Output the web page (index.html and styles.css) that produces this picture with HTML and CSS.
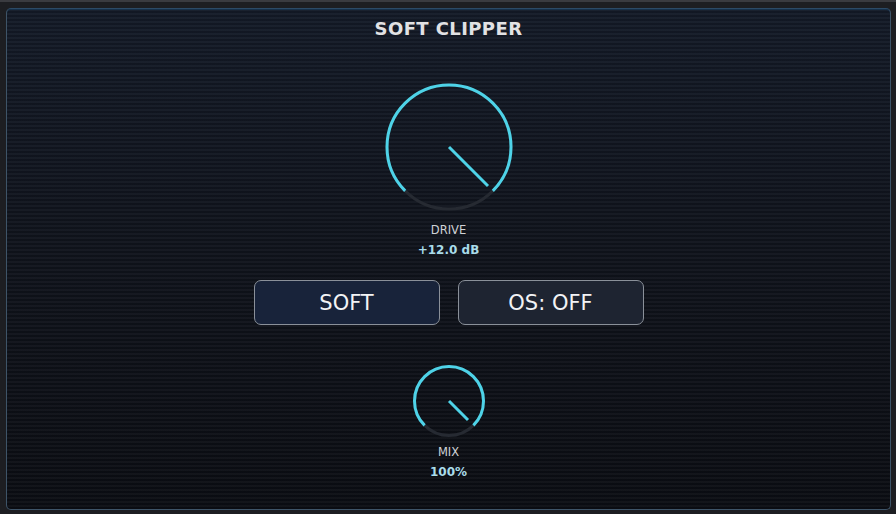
FILE: index.html
```html
<!DOCTYPE html>
<html lang="en">
<head>
<meta charset="utf-8">
<title>Soft Clipper</title>
<link rel="stylesheet" href="styles.css">
</head>
<body>
<div class="frame">
  <main class="panel">
    <h1 class="title">SOFT CLIPPER</h1>

    <section class="knob knob-drive">
      <svg class="dial" width="130" height="130" viewBox="0 0 130 130">
        <circle class="track" cx="65" cy="65" r="62"/>
        <path class="value-arc" d="M21.16 108.84 A62 62 0 1 1 108.84 108.84"/>
        <line class="pointer" x1="65" y1="65" x2="104" y2="104"/>
      </svg>
      <div class="knob-label">DRIVE</div>
      <div class="knob-value">+12.0 dB</div>
    </section>

    <div class="toggles">
      <button class="toggle toggle-mode">SOFT</button>
      <button class="toggle toggle-os">OS: OFF</button>
    </div>

    <section class="knob knob-mix">
      <svg class="dial" width="74" height="74" viewBox="0 0 74 74">
        <circle class="track" cx="37" cy="37" r="34.5"/>
        <path class="value-arc" d="M12.6 61.4 A34.5 34.5 0 1 1 61.4 61.4"/>
        <line class="pointer" x1="37" y1="37" x2="56" y2="56"/>
      </svg>
      <div class="knob-label">MIX</div>
      <div class="knob-value">100%</div>
    </section>
  </main>
</div>
</body>
</html>
```

FILE: styles.css
```css
html, body {
  margin: 0;
  padding: 0;
}

body {
  width: 896px;
  height: 514px;
  background: #1d1e22;
  font-family: "DejaVu Sans", Verdana, sans-serif;
  overflow: hidden;
}

.frame {
  height: 514px;
  box-sizing: border-box;
  border-top: 2px solid #3a3b40;
  padding: 6px 5px 4px 6px;
}

.panel {
  box-sizing: border-box;
  height: 502px;
  border: 1px solid #3e5468;
  border-top-color: #2c4a66;
  border-radius: 5px;
  background:
    repeating-linear-gradient(to bottom,
      rgba(255, 255, 255, 0.03) 0px,
      rgba(255, 255, 255, 0.03) 2px,
      rgba(0, 0, 0, 0.08) 2px,
      rgba(0, 0, 0, 0.08) 4px),
    linear-gradient(to bottom, #131a27 0%, #10141d 40%, #0b0d13 100%);
  box-shadow: inset 0 1px 0 #16304a;
  display: flex;
  flex-direction: column;
  align-items: center;
}

.title {
  margin: 9px 0 0;
  font-size: 18px;
  font-weight: bold;
  line-height: 22px;
  color: #e2e2e4;
  letter-spacing: 0.4px;
}

.knob {
  display: flex;
  flex-direction: column;
  align-items: center;
}

.knob-drive {
  margin-top: 42px;
}

.knob-mix {
  margin-top: 39px;
}

.dial {
  display: block;
}

.track {
  fill: none;
  stroke: #262a32;
  stroke-width: 3;
}

.value-arc {
  fill: none;
  stroke: #4ed3e8;
  stroke-width: 3;
}

.pointer {
  stroke: #4ed3e8;
  stroke-width: 3;
}

.knob-label {
  font-size: 11.5px;
  line-height: 14px;
  color: #cfd2d6;
  margin-top: 11px;
}

.knob-mix .knob-label {
  margin-top: 7px;
}

.knob-value {
  font-size: 12px;
  font-weight: bold;
  line-height: 15px;
  color: #a9dcea;
  margin-top: 6px;
}

.toggles {
  display: flex;
  gap: 18px;
  margin-top: 22px;
}

.toggle {
  width: 186px;
  height: 45px;
  box-sizing: border-box;
  border: 1.5px solid #8a9099;
  border-radius: 7px;
  font-family: "DejaVu Sans", Verdana, sans-serif;
  font-size: 21px;
  color: #f2f3f5;
  padding: 0;
  cursor: pointer;
}

.toggle-mode {
  background: #18233a;
}

.toggle-os {
  background: #1e2431;
}
```
